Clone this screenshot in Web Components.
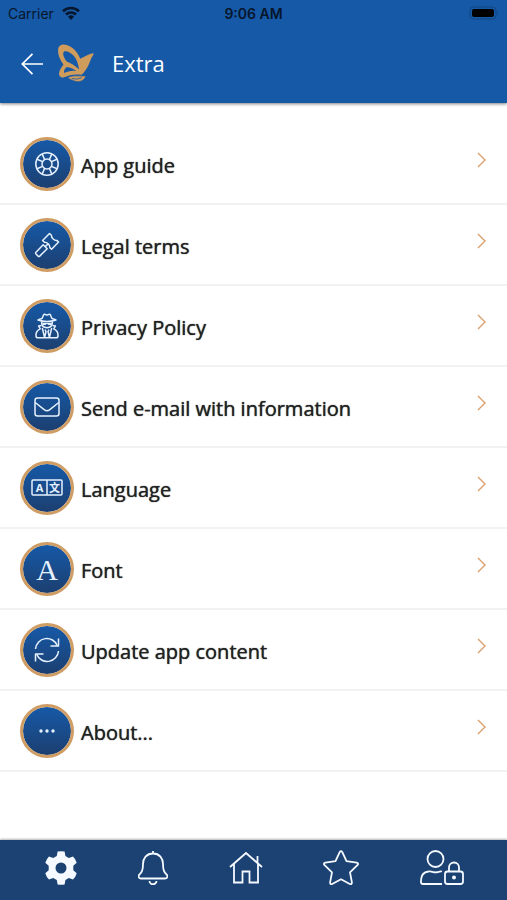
<!DOCTYPE html>
<html lang="en">
<head>
<meta charset="utf-8">
<meta name="viewport" content="width=device-width, initial-scale=1">
<title>Extra</title>
<style>
    body{
        margin: 0;
        background-color: white;
        font-family: "Open Sans", "Noto Sans", sans-serif;
    }
</style>
</head>
<body>
<extra-page></extra-page>

<script>
// stroke icons, all drawn with currentColor
const icons = {
    guide: `<svg width="26" height="26" viewBox="0 0 26 26">
        <circle cx="13" cy="13" r="11.2"/><circle cx="13" cy="13" r="5"/>
        <path d="M8.2 2.9 L10.6 8.6 M2.9 8.2 L8.6 10.6 M17.8 2.9 L15.4 8.6 M23.1 8.2 L17.4 10.6 M2.9 17.8 L8.6 15.4 M8.2 23.1 L10.6 17.4 M23.1 17.8 L17.4 15.4 M17.8 23.1 L15.4 17.4"/>
    </svg>`,
    legal: `<svg width="26" height="26" viewBox="0 0 26 26">
        <path d="M15.5 1.5 L17.4 3.2 Q17.4 5.4 19.2 7 Q20.8 8.5 22.8 8.4 L24.6 10.1 L17.6 17.3 L15.9 15.6 Q15.9 13.3 14.2 11.7 Q12.5 10.1 10.4 10.2 L8.6 8.5 Z"/>
        <path d="M14.2 11.7 L11.5 14.4 M9.2 12.8 L13.2 16.8 L5.7 24.1 Q4.9 24.8 4.1 24.1 L2 22 Q1.2 21.1 2 20.2 Z"/>
    </svg>`,
    privacy: `<svg width="26" height="26" viewBox="0 0 26 26">
        <path d="M4 7 Q8 5.6 8.2 5.2 L9.6 1.8 Q10.2 .8 11.5 1.5 L13 2.1 L14.5 1.5 Q15.8 .8 16.4 1.8 L17.8 5.2 Q18 5.6 22 7 Q13 10 4 7 Z"/>
        <path d="M7.6 8.5 Q7.4 14.6 13 14.8 Q18.6 14.6 18.4 8.5"/>
        <path d="M8 9.8 H18 L17 12 H14.5 L13 10.8 L11.5 12 H9 Z" fill="currentColor" stroke="none"/>
        <path d="M7.5 12.5 L4.6 13 L6.2 15.9 Q2 17.8 2 22 V23 Q2 24.8 4 24.8 H22 Q24 24.8 24 23 V22 Q24 17.8 19.8 15.9 L21.4 13 L18.5 12.5 M8.3 15 L10.6 24.5 L12 18.5 L11 16.6 M17.7 15 L15.4 24.5 L14 18.5 L15 16.6"/>
    </svg>`,
    mail: `<svg width="26" height="26" viewBox="0 0 26 26">
        <rect x="1" y="4" width="24" height="18" rx="2.5"/>
        <path d="M1.2 8.5 L10.5 15.8 Q13 17.6 15.5 15.8 L24.8 8.5"/>
    </svg>`,
    language: `<svg width="32" height="26" viewBox="0 0 32 26">
        <rect x="1" y="5" width="30" height="15" rx="1"/><path d="M16 5 V20"/>
        <text x="8.5" y="16.5" font-size="11" font-weight="700" class="glyph">A</text>
        <text x="23.5" y="16.5" font-size="11" font-weight="700" class="glyph">文</text>
    </svg>`,
    font: `<svg width="30" height="34" viewBox="0 0 30 34">
        <text x="15" y="28" font-size="30" class="glyph serif">A</text>
    </svg>`,
    update: `<svg width="26" height="26" viewBox="0 0 26 26">
        <path d="M1.5 12 A11.3 11.3 0 0 1 23.3 8.7 M24.5 14 A11.3 11.3 0 0 1 2.7 17.3"/>
        <path d="M24.5 1.5 V9 H16.5 M1.5 24.5 V17 H9.5"/>
    </svg>`,
    about: `<svg width="26" height="26" viewBox="0 0 26 26">
        <g fill="currentColor" stroke="none"><circle cx="7" cy="13" r="1.7"/><circle cx="13" cy="13" r="1.7"/><circle cx="19" cy="13" r="1.7"/></g>
    </svg>`,
    settings: `<svg width="32" height="36" viewBox="0 0 32 36">
        <path fill="currentColor" stroke="none" fill-rule="evenodd" d="M12.6 1.6 Q16 .7 19.6 1.6 L20.4 6 L23.8 8 L28 6.4 Q30.8 9 31.7 12.8 L28.3 15.8 V20.2 L31.7 23.2 Q30.6 27 28 29.6 L23.8 28 L20.4 30 L19.6 34.4 Q16 35.2 12.6 34.4 L11.8 30 L8.2 28 L4 29.6 Q1.3 26.8 .3 23.2 L3.7 20.2 V15.8 L.3 12.8 Q1.4 9 4 6.4 L8.2 8 L11.8 6 Z M16 12.5 A5.5 5.5 0 1 0 16 23.5 A5.5 5.5 0 1 0 16 12.5 Z"/>
    </svg>`,
    bell: `<svg width="30" height="36" viewBox="0 0 30 36">
        <path d="M15 1 V3.5 C8.5 3.5 5 8.2 5 14 C5 21 3.5 22.3 1.3 24.7 C-.2 26.5 .8 28.5 3 28.5 H27 C29.2 28.5 30.2 26.5 28.7 24.7 C26.5 22.3 25 21 25 14 C25 8.2 21.5 3.5 15 3.5"/>
        <path d="M11.5 31 A3.5 3.2 0 0 0 18.5 31"/>
    </svg>`,
    home: `<svg width="34" height="36" viewBox="0 0 34 36">
        <path d="M1 17 L17 3 L33 17 M5 14 V32.5 H13.5 V21.5 H20.5 V32.5 H29 V14 M28.5 13 V6"/>
    </svg>`,
    star: `<svg width="36" height="36" viewBox="0 0 36 36">
        <path stroke-linejoin="round" d="M16.7 2.2 Q18 .2 19.3 2.2 L23.5 11.2 L33.6 12.7 Q36 13.3 34.4 15.2 L27 22.3 L28.9 32.4 Q29 34.8 26.8 34 L18 29.3 L9.2 34 Q7 34.8 7.1 32.4 L9 22.3 L1.6 15.2 Q0 13.3 2.4 12.7 L12.5 11.2 Z"/>
    </svg>`,
    account: `<svg width="44" height="36" viewBox="0 0 44 36">
        <circle cx="15.5" cy="9" r="8"/>
        <path d="M22 21.5 Q20.5 21 18.5 21.9 Q15.5 23 12.5 21.9 Q10.5 21 8.5 21.5 Q1 22.5 1 30.5 V32 Q1 34 3 34 H22"/>
        <rect x="25" y="21.5" width="18" height="12.5" rx="2.5"/>
        <path d="M29 21.5 V17.5 A5 5 0 0 1 39 17.5 V21.5"/>
        <circle cx="34" cy="27.5" r="2" fill="currentColor" stroke="none"/>
    </svg>`
};

class StatusBarComponent extends HTMLElement{

    constructor(){
        super();
        this.attachShadow({mode: 'open'});
    }

    connectedCallback(){
        this.shadowRoot.innerHTML = `
        <style>
        :host{
            display: grid;
            grid-template-columns: 1fr auto 1fr;
            align-items: center;
            height: 26px;
            padding: 0 8px;
            color: #06162c;
            font-family: Inter, "Liberation Sans", sans-serif;
            font-size: 14px;
        }
        .carrier{
            display: flex;
            align-items: center;
            gap: 8px;
        }
        .time{
            font-weight: 600;
        }
        .battery{
            justify-self: end;
        }
        svg{
            display: block;
        }
        </style>
        <span class="carrier">
            <span>Carrier</span>
            <svg width="18" height="14" viewBox="0 0 18 14" fill="none" stroke="#06162c" stroke-width="2.6">
                <path d="M1 5.2 A11.5 11.5 0 0 1 17 5.2 M4 8.5 A7.2 7.2 0 0 1 14 8.5"/>
                <path d="M9 14 L6 10.8 A4.3 4.3 0 0 1 12 10.8 Z" fill="#06162c" stroke="none"/>
            </svg>
        </span>
        <span class="time">9:06 AM</span>
        <svg class="battery" width="30" height="14" viewBox="0 0 30 14">
            <rect x="1" y="1" width="26" height="12" rx="3.5" fill="none" stroke="#104682"/>
            <rect x="3" y="3" width="22" height="8" rx="2" fill="#000"/>
            <path d="M28 5 Q29.5 7 28 9 Z" fill="#104682"/>
        </svg>
        `
    }
}

customElements.define('status-bar', StatusBarComponent);


class PageHeaderComponent extends HTMLElement{

    constructor(){
        super();
        this.attachShadow({mode: 'open'});
    }

    connectedCallback(){
        this.shadowRoot.innerHTML = `
        <style>
        :host{
            display: block;
            background-color: #1659a7;
            color: white;
            box-shadow: 0 1px 3px rgba(0, 0, 0, .5);
        }
        .toolbar{
            display: flex;
            align-items: center;
            height: 77px;
            padding: 0 20px 2px;
            box-sizing: border-box;
        }
        button{
            display: flex;
            padding: 0;
            border: 0;
            background: none;
            color: inherit;
        }
        .logo{
            margin-left: 12px;
            margin-right: 17px;
            margin-bottom: 2px;
        }
        h1{
            margin: 0;
            padding-bottom: 2px;
            font-size: 22px;
            font-weight: 400;
            line-height: 30px;
        }
        </style>
        <status-bar></status-bar>
        <div class="toolbar">
            <button aria-label="Back">
                <svg width="24" height="24" viewBox="0 0 24 24" fill="none" stroke="currentColor" stroke-width="1.7">
                    <path d="M12.5 1.8 L2.3 12 L12.5 22.2 M2.3 12 H23"/>
                </svg>
            </button>
            <svg class="logo" width="39" height="40" viewBox="0 0 39 40" fill="#cf9c5c">
                <path fill-rule="evenodd" d="M2.3 5.6 C3 1.2 8 .8 12 2.5 C18 5 22.2 10 24.2 15.8 C28.2 13.8 32 11.5 36.8 10.3 C38 10.2 37.7 11.3 37 12.3 C34.2 16 34 20.5 31 25 C28.4 28.8 27 30.8 25.7 31.8 C19 31.2 16 31.2 9 34.1 C5 35.4 2.3 32.8 3.2 29.4 C4 25.8 6 24 7.5 21.5 C4 17 1.3 11 2.3 5.6 Z M8 8.6 C6 10.6 8 15.5 11 18.8 C15 20 19.5 22.8 23 26.6 C22.4 21 20.5 15.4 17.2 12.2 C14.4 9.4 10.4 7.2 8 8.6 Z M10.2 24.2 C8 26.4 7.4 29.3 8.4 30 C12 28.4 16.5 27.2 20.5 28.3 C18 25.8 14 23.8 10.2 24.2 Z"/>
                <path d="M11.5 35 C16 31.6 24 33.4 30 33 C28.5 36.5 25 39.4 20.5 38.5 C17 38 14.5 36 11.5 35 Z" stroke="#1659a7" stroke-width=".6"/>
                <path d="M16 35.6 Q21 37 26 34.7" fill="none" stroke="#1659a7" stroke-width=".8"/>
            </svg>
            <h1><slot></slot></h1>
        </div>
        `
    }
}

customElements.define('page-header', PageHeaderComponent);


class MenuRowComponent extends HTMLElement{

    constructor(){
        super();
        this.attachShadow({mode: 'open'});
    }

    connectedCallback(){
        this.shadowRoot.innerHTML = `
        <style>
        :host{
            display: block;
            border-bottom: 2px solid #f2f2f2;
        }
        a{
            display: flex;
            align-items: center;
            height: 79px;
            padding: 0 20px;
            color: #222;
            text-decoration: none;
        }
        .badge{
            display: flex;
            align-items: center;
            justify-content: center;
            width: 54px;
            height: 54px;
            box-sizing: border-box;
            border: 3px solid #cf9c63;
            border-radius: 50%;
            background: linear-gradient(#1659a7, #1c3f70) padding-box;
            color: #e6f1ff;
        }
        .badge svg{
            fill: none;
            stroke: currentColor;
            stroke-width: 1.5;
            stroke-linejoin: round;
        }
        .glyph{
            fill: currentColor;
            stroke: none;
            text-anchor: middle;
            font-family: "Open Sans", "Noto Sans CJK SC", sans-serif;
        }
        .serif{
            font-family: "Liberation Serif", serif;
        }
        .label{
            flex: 1;
            margin-left: 7px;
            padding-top: 4px;
            font-size: 20px;
            line-height: 26px;
            /* Open Sans has no medium weight here */
            text-shadow: 0 0 1px #222;
        }
        .chevron{
            margin-bottom: 8px;
        }
        </style>
        <a href="#${this.getAttribute('icon')}">
            <span class="badge">${icons[this.getAttribute('icon')]}</span>
            <span class="label"><slot></slot></span>
            <svg class="chevron" width="11" height="16" viewBox="0 0 11 16" fill="none" stroke="#dc9f6c" stroke-width="1.4">
                <path d="M2 1 L9 8 L2 15"/>
            </svg>
        </a>
        `
    }
}

customElements.define('menu-row', MenuRowComponent);


class TabBarComponent extends HTMLElement{

    constructor(){
        super();
        this.attachShadow({mode: 'open'});
    }

    connectedCallback(){
        const tabs = ['settings', 'bell', 'home', 'star', 'account'];

        this.shadowRoot.innerHTML = `
        <style>
        :host{
            display: block;
            background-color: #1c4173;
            box-shadow: 0 -1px 2px rgba(0, 0, 0, .3);
        }
        nav{
            display: flex;
            align-items: center;
            justify-content: space-between;
            height: 60px;
            padding: 0 43px 4px 45px;
            box-sizing: border-box;
        }
        a{
            display: flex;
            color: #f4faff;
        }
        svg{
            fill: none;
            stroke: currentColor;
            stroke-width: 1.8;
        }
        </style>
        <nav>
            ${tabs.map(tab => `<a href="#${tab}" aria-label="${tab}">${icons[tab]}</a>`).join('')}
        </nav>
        `
    }
}

customElements.define('tab-bar', TabBarComponent);


class ExtraPageComponent extends HTMLElement{

    constructor(){
        super();
        this.attachShadow({mode: 'open'});
    }

    connectedCallback(){
        this.rows = [
            {icon: 'guide', label: 'App guide'},
            {icon: 'legal', label: 'Legal terms'},
            {icon: 'privacy', label: 'Privacy Policy'},
            {icon: 'mail', label: 'Send e-mail with information'},
            {icon: 'language', label: 'Language'},
            {icon: 'font', label: 'Font'},
            {icon: 'update', label: 'Update app content'},
            {icon: 'about', label: 'About...'}
        ];
        this.render();
    }

    render(){
        this.shadowRoot.innerHTML = `
        <style>
        :host{
            display: flex;
            flex-direction: column;
            min-height: 100vh;
        }
        main{
            flex: 1;
            padding-top: 21px;
        }
        </style>
        <page-header>Extra</page-header>
        <main>
            ${this.rows.map(row => `<menu-row icon="${row.icon}">${row.label}</menu-row>`).join('')}
        </main>
        <tab-bar></tab-bar>
        `
    }
}

customElements.define('extra-page', ExtraPageComponent);
</script>
</body>
</html>
